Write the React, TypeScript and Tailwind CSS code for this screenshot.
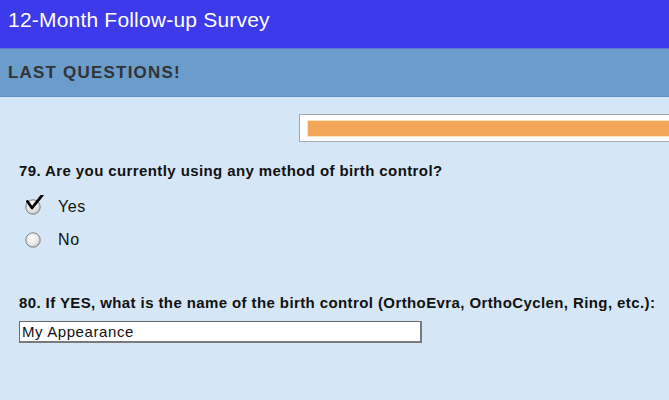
import React from "react";

function CheckedRadio() {
  return (
    <svg width="26" height="24" viewBox="0 0 26 24" className="block">
      <defs>
        <radialGradient id="rg1" cx="40%" cy="35%" r="70%">
          <stop offset="0%" stopColor="#ffffff" />
          <stop offset="65%" stopColor="#e2e2e2" />
          <stop offset="100%" stopColor="#bdbdbd" />
        </radialGradient>
      </defs>
      <circle cx="8" cy="12" r="7.2" fill="url(#rg1)" stroke="#7e7e7e" strokeWidth="1" />
      <path d="M2.5 6.5 L7 13 L17.5 -0.2" fill="none" stroke="#000" strokeWidth="2.8" strokeLinecap="round" strokeLinejoin="round" />
    </svg>
  );
}

function Radio() {
  return (
    <svg width="26" height="24" viewBox="0 0 26 24" className="block">
      <defs>
        <radialGradient id="rg2" cx="40%" cy="35%" r="70%">
          <stop offset="0%" stopColor="#ffffff" />
          <stop offset="65%" stopColor="#e6e6e6" />
          <stop offset="100%" stopColor="#c2c2c2" />
        </radialGradient>
      </defs>
      <circle cx="8" cy="12" r="7.2" fill="url(#rg2)" stroke="#7e7e7e" strokeWidth="1" />
    </svg>
  );
}

export default function App() {
  return (
    <div
      className="w-[669px] h-[400px] overflow-hidden bg-[#d5e7f6]"
      style={{ fontFamily: '"Liberation Sans", Arial, sans-serif' }}
    >
      <div className="h-[48px] bg-[#3c3aeb] pl-[8px] pt-[7px] text-white text-[21px] leading-[25px] tracking-[0.2px]">
        12-Month Follow-up Survey
      </div>
      <div className="h-[49px] bg-[#6a9dcc] border-t border-[#5f78d8] border-b border-b-[#5e8fc2] pl-[8px] flex items-center">
        <span className="text-[17px] font-bold text-[#333] tracking-[1.2px] leading-none">LAST QUESTIONS!</span>
      </div>
      <div className="pt-[17px]">
        <div className="ml-[299px] w-[420px] h-[28px] border border-[#a0a8b4] bg-white pl-[7px] pt-[5px]">
          <div className="h-[17px] w-full bg-[#f1a757] border border-[#fbe3c0]" />
        </div>
        <div className="ml-[19px] mt-[20px] text-[15px] leading-[17px] font-bold text-[#111] tracking-[0.4px] whitespace-nowrap">
          79. Are you currently using any method of birth control?
        </div>
        <div className="ml-[25px] mt-[16px] flex items-center gap-[7px] h-[24px]">
          <CheckedRadio />
          <span className="text-[16px] text-[#111] leading-none tracking-[0.6px]">Yes</span>
        </div>
        <div className="ml-[25px] mt-[9px] flex items-center gap-[7px] h-[24px]">
          <Radio />
          <span className="text-[16px] text-[#111] leading-none tracking-[0.6px]">No</span>
        </div>
        <div className="ml-[19px] mt-[42px] text-[15px] leading-[17px] font-bold text-[#111] tracking-[0.4px] whitespace-nowrap">
          80. If YES, what is the name of the birth control (OrthoEvra, OrthoCyclen, Ring, etc.):
        </div>
        <div className="ml-[19px] mt-[10px] w-[403px] h-[22px] bg-white border border-[#6c6c6c] border-r-2 border-b-2 border-r-[#7a7a7a] border-b-[#7a7a7a] pl-[2px] flex items-center">
          <span className="text-[15px] text-[#111] leading-none tracking-[0.6px]">My Appearance</span>
        </div>
      </div>
    </div>
  );
}
